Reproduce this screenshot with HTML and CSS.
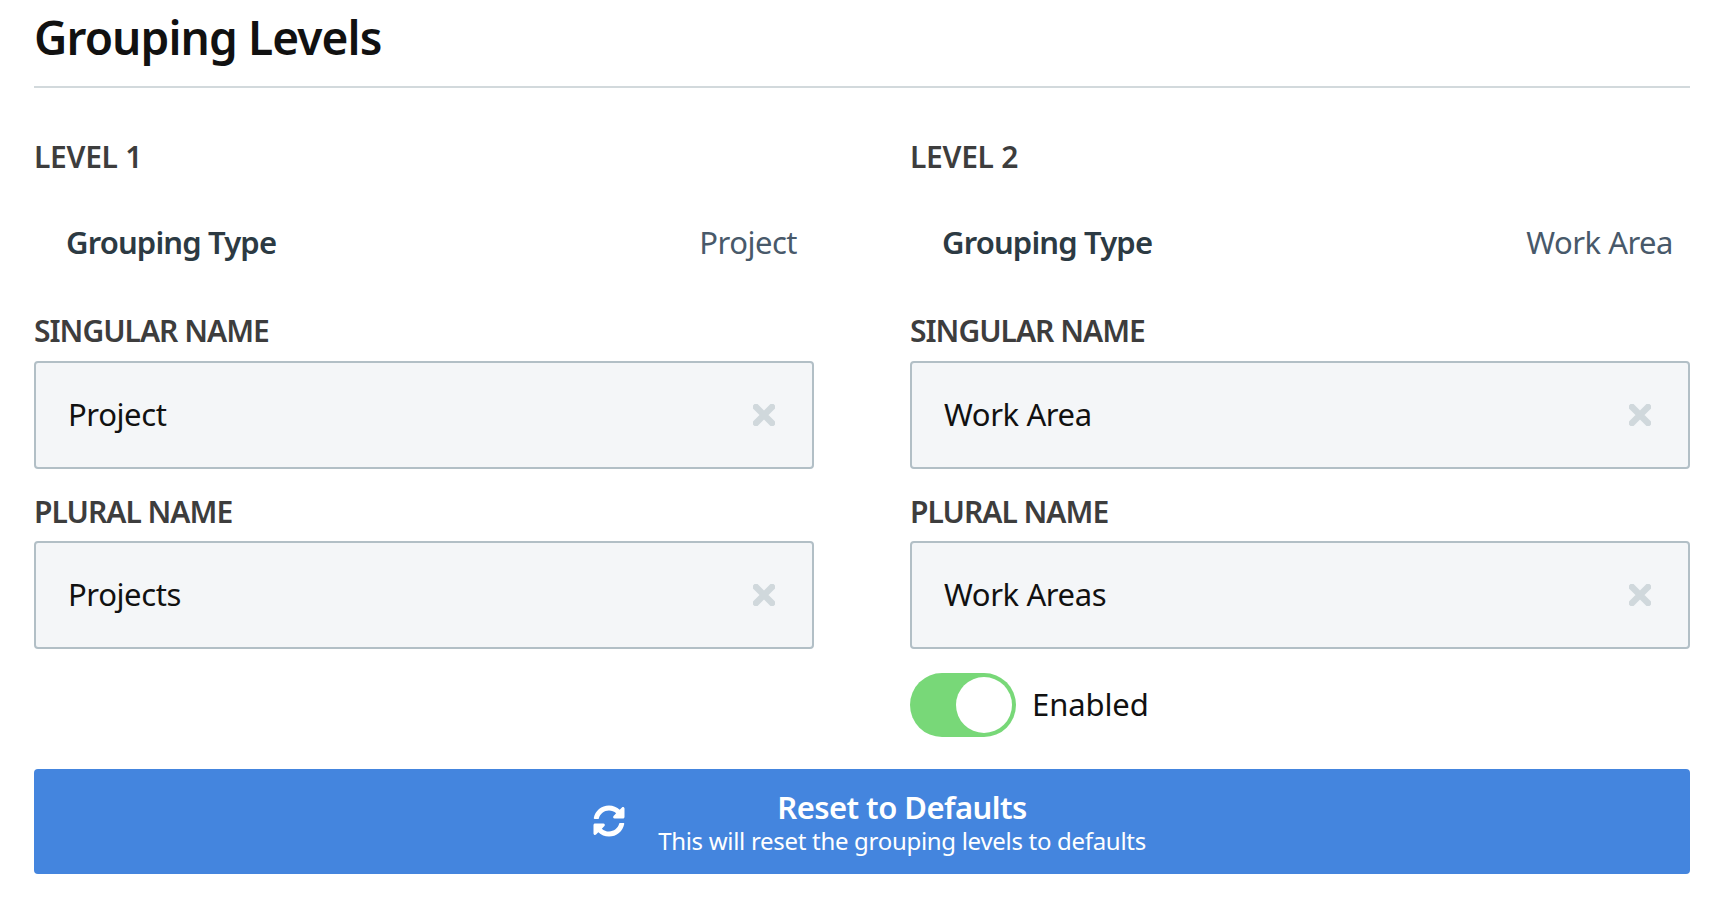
FILE: index.html
```html
<!DOCTYPE html>
<html lang="en">
<head>
<meta charset="utf-8">
<title>Grouping Levels</title>
<link rel="stylesheet" href="styles.css">
</head>
<body>
<main class="page">
  <h1 class="title">Grouping Levels</h1>
  <div class="grid">
    <section class="col">
      <h2 class="level">LEVEL 1</h2>
      <div class="type-row"><span class="type-name">Grouping Type</span><span class="type-value">Project</span></div>
      <label class="label label-first">SINGULAR NAME</label>
      <div class="field"><span class="field-text">Project</span>
        <svg class="clear" viewBox="0 0 22 22"><path d="M3 3L19 19M19 3L3 19"/></svg></div>
      <label class="label">PLURAL NAME</label>
      <div class="field"><span class="field-text">Projects</span>
        <svg class="clear" viewBox="0 0 22 22"><path d="M3 3L19 19M19 3L3 19"/></svg></div>
    </section>
    <section class="col">
      <h2 class="level">LEVEL 2</h2>
      <div class="type-row"><span class="type-name">Grouping Type</span><span class="type-value">Work Area</span></div>
      <label class="label label-first">SINGULAR NAME</label>
      <div class="field"><span class="field-text">Work Area</span>
        <svg class="clear" viewBox="0 0 22 22"><path d="M3 3L19 19M19 3L3 19"/></svg></div>
      <label class="label">PLURAL NAME</label>
      <div class="field"><span class="field-text">Work Areas</span>
        <svg class="clear" viewBox="0 0 22 22"><path d="M3 3L19 19M19 3L3 19"/></svg></div>
      <div class="toggle-row"><span class="toggle"><span class="knob"></span></span><span class="toggle-label">Enabled</span></div>
    </section>
  </div>
  <div class="reset">
    <svg class="reset-icon" viewBox="0 0 512 512"><path d="M370.72 133.28C339.458 104.008 298.888 87.962 255.848 88c-77.458.068-144.328 53.178-162.791 126.85-1.344 5.363-6.122 9.15-11.651 9.15H24.103c-7.498 0-13.194-6.807-11.807-14.176C33.933 94.924 134.813 8 256 8c66.448 0 126.791 26.136 171.315 68.685L463.03 40.97C478.149 25.851 504 36.559 504 57.941V192c0 13.255-10.745 24-24 24H345.941c-21.382 0-32.09-25.851-16.971-40.971l41.75-41.749zM32 296h134.059c21.382 0 32.09 25.851 16.971 40.971l-41.75 41.75c31.262 29.273 71.835 45.319 114.876 45.28 77.418-.07 144.315-53.144 162.787-126.849 1.344-5.363 6.122-9.15 11.651-9.15h57.304c7.498 0 13.194 6.807 11.807 14.176C478.067 417.076 377.187 504 256 504c-66.448 0-126.791-26.136-171.315-68.685L48.97 471.03C33.851 486.149 8 475.441 8 454.059V320c0-13.255 10.745-24 24-24z"/></svg>
    <div class="reset-text">
      <div class="reset-title">Reset to Defaults</div>
      <div class="reset-sub">This will reset the grouping levels to defaults</div>
    </div>
  </div>
</main>
</body>
</html>
```
FILE: styles.css
```css
* { box-sizing: border-box; }
html, body { margin: 0; background: #fff; }
body { font-family: "Noto Sans", "Open Sans", sans-serif; color: #111; }
.page { width: 1734px; height: 904px; padding: 0 44px 0 34px; overflow: hidden; }
.title {
  margin: 0; height: 88px; padding-top: 7px;
  font-size: 46px; line-height: 60px; font-weight: 600; letter-spacing: -.9px;
  color: #111; border-bottom: 2px solid #d2d9dc;
}
.grid { display: grid; grid-template-columns: 780px 780px; column-gap: 96px; }
.col { min-width: 0; }
.level {
  margin: 51px 0 0; font-size: 30px; line-height: 36px; font-weight: 600;
  letter-spacing: -.3px; color: #3d3d3d;
}
.type-row {
  display: flex; justify-content: space-between; align-items: center;
  height: 50px; margin-top: 42px; padding: 0 17px 0 32px;
}
.type-name { font-size: 31px; font-weight: 600; letter-spacing: -.85px; color: #2c3a43; }
.type-value { font-size: 31px; font-weight: 400; letter-spacing: -.5px; color: #48596a; }
.label {
  display: block; margin-top: 25px; height: 36px;
  font-size: 30px; line-height: 36px; font-weight: 600; letter-spacing: -1px; color: #3d3d3d;
}
.label-first { margin-top: 46px; height: 37px; }
.field {
  display: flex; align-items: center; justify-content: space-between;
  height: 108px; margin-top: 11px; padding: 0 37px 0 32px;
  background: #f4f6f8; border: 2px solid #b2bfc6; border-radius: 4px;
}
.field-text { margin-top: -2px; font-size: 31px; letter-spacing: -.4px; color: #111; }
.clear { width: 22px; height: 22px; flex: none; }
.clear path { fill: none; stroke: #d0d8dc; stroke-width: 6.5; stroke-linecap: round; }
.toggle-row { display: flex; align-items: center; height: 64px; margin-top: 24px; }
.toggle {
  display: flex; justify-content: flex-end; align-items: center;
  width: 106px; height: 64px; padding-right: 4px; border-radius: 32px; background: #78d878;
}
.knob { width: 56px; height: 56px; border-radius: 50%; background: #fff; }
.toggle-label { margin: -2px 0 0 16px; font-size: 31px; letter-spacing: -.1px; color: #111; }
.reset {
  display: flex; align-items: center; justify-content: center; gap: 33px;
  height: 105px; margin-top: 32px; padding-left: 15px; border-radius: 4px; background: #4485de; color: #fff;
}
.reset-icon { width: 32px; height: 32px; margin-top: -2px; fill: #fff; flex: none; }
.reset-text { text-align: center; }
.reset-title { font-size: 31px; line-height: 38px; font-weight: 600; letter-spacing: -.55px; }
.reset-sub { font-size: 24px; line-height: 30px; letter-spacing: -.3px; }
```
